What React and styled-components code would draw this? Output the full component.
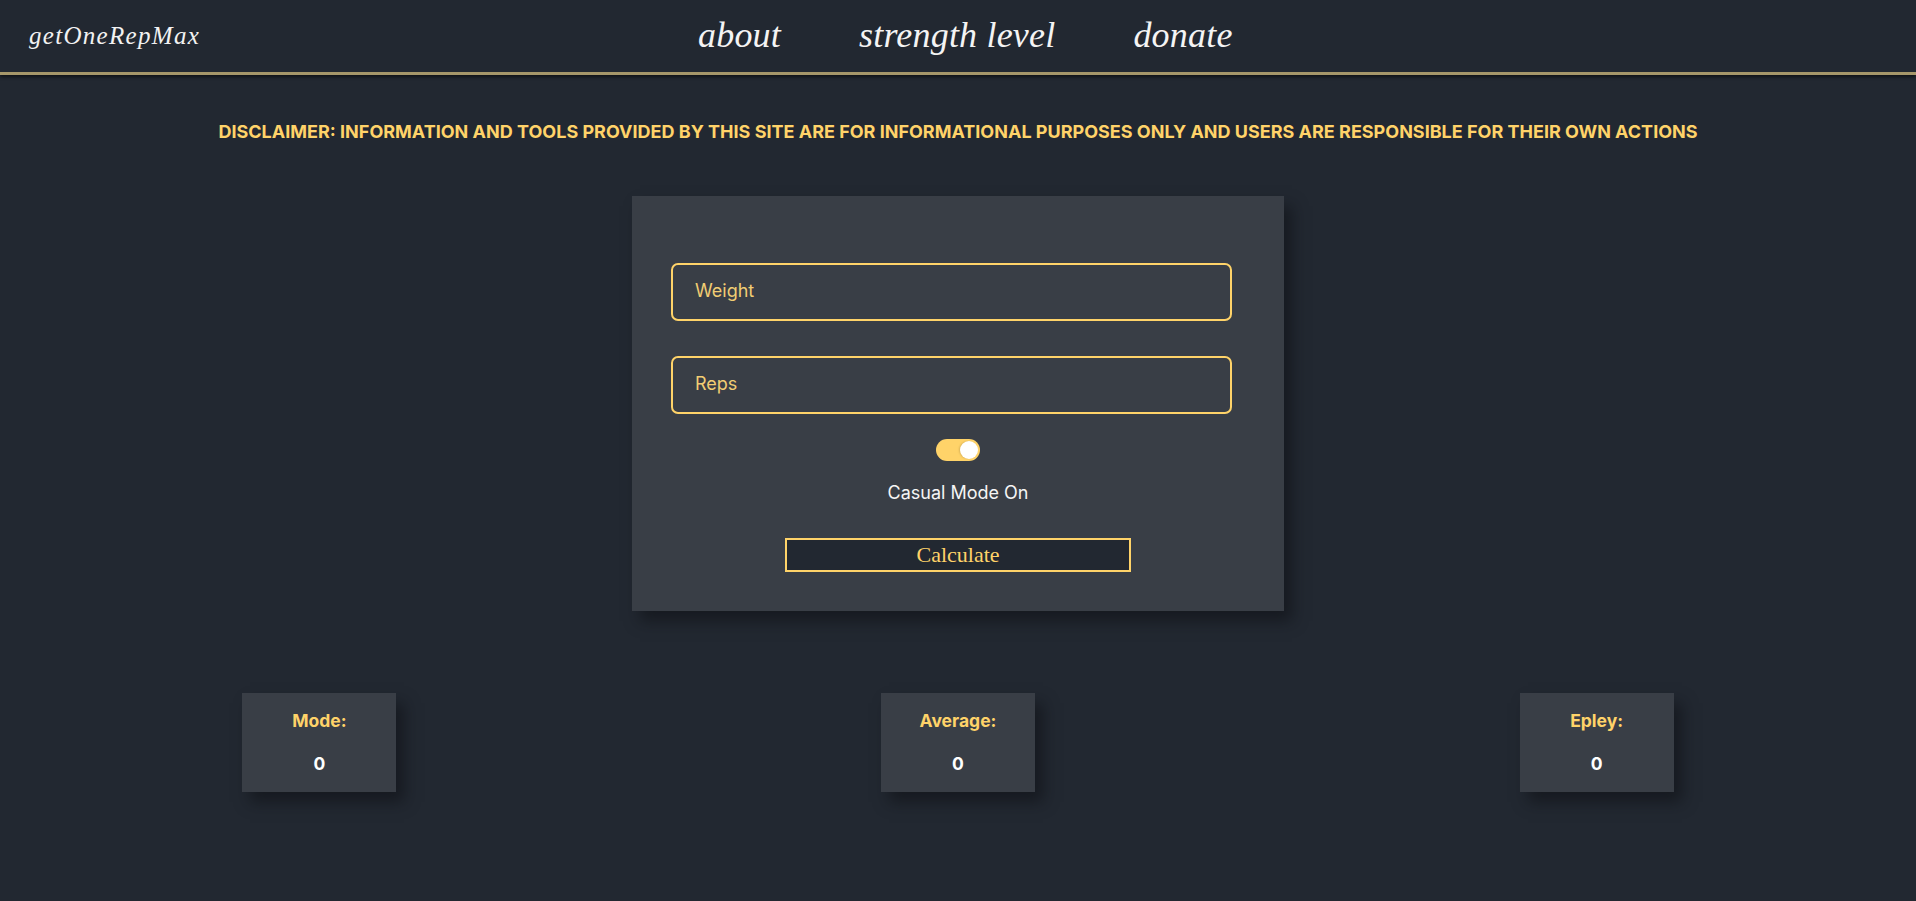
import React from "react";
import styled, { createGlobalStyle } from "styled-components";

const GOLD = "#FFD369";
const DARK = "#222831";
const CARD = "#393E46";

const GlobalStyle = createGlobalStyle`
  html, body {
    margin: 0;
    padding: 0;
    background: ${DARK};
  }
  body {
    font-family: Inter, "Noto Sans", sans-serif;
    color: #eeeeee;
  }
  * { box-sizing: border-box; }
`;

const Page = styled.div`
  min-height: 901px;
  background: ${DARK};
`;

const Header = styled.header`
  height: 75px;
  display: flex;
  align-items: center;
  border-bottom: 3px solid #a6976a;
  box-shadow: 0 2px 3px rgba(0, 0, 0, 0.55);
`;

const Logo = styled.a`
  width: 698px;
  padding-left: 29px;
  font-family: "Liberation Serif", serif;
  font-style: italic;
  font-size: 25px;
  letter-spacing: 1.3px;
  color: #f2f2f2;
  text-decoration: none;
  margin-top: 0;
`;

const Nav = styled.nav`
  display: flex;
  align-items: center;
  gap: 78px;
`;

const NavLink = styled.a`
  font-family: "Liberation Serif", serif;
  font-style: italic;
  font-size: 36px;
  letter-spacing: 0.2px;
  color: #f4f4f4;
  text-decoration: none;
  margin-top: -3px;
`;

const Disclaimer = styled.p`
  margin: 0;
  padding-top: 46px;
  text-align: center;
  font-family: Inter, sans-serif;
  font-weight: 700;
  font-size: 18px;
  line-height: 22px;
  color: ${GOLD};
  text-transform: uppercase;
`;

const Main = styled.main`
  display: flex;
  flex-direction: column;
  align-items: center;
  padding-top: 53px;
`;

const Card = styled.section`
  width: 652px;
  background: ${CARD};
  padding: 67px 39px 39px;
  display: flex;
  flex-direction: column;
  align-items: center;
  box-shadow: 8px 10px 14px rgba(15, 17, 22, 0.6);
`;

const Input = styled.input`
  align-self: flex-start;
  width: 561px;
  height: 58px;
  margin-bottom: ${(p) => p.$gap}px;
  background: transparent;
  border: 2px solid ${GOLD};
  border-radius: 7px;
  padding: 0 22px 3px;
  font-family: Inter, sans-serif;
  font-size: 18px;
  color: ${GOLD};
  outline: none;
  &::placeholder {
    color: #f1cd73;
  }
`;

const Toggle = styled.div`
  width: 44px;
  height: 22px;
  border-radius: 11px;
  background: ${GOLD};
  position: relative;
  margin-top: 1px;
`;

const Knob = styled.span`
  position: absolute;
  right: 2px;
  top: 2px;
  width: 18px;
  height: 18px;
  border-radius: 50%;
  background: #ffffff;
  box-shadow: -1px 0 2px rgba(0, 0, 0, 0.15);
`;

const ModeLabel = styled.div`
  margin-top: 21px;
  font-family: Inter, sans-serif;
  font-size: 18px;
  line-height: 22px;
  color: #f5f5f5;
`;

const CalcButton = styled.button`
  margin-top: 34px;
  width: 346px;
  height: 34px;
  background: ${DARK};
  border: 2px solid ${GOLD};
  font-family: "Liberation Serif", serif;
  font-size: 22px;
  color: ${GOLD};
  cursor: pointer;
  padding: 0;
`;

const Results = styled.div`
  width: 100%;
  display: grid;
  grid-template-columns: repeat(3, 1fr);
  margin-top: 82px;
`;

const ResultCell = styled.div`
  display: flex;
  justify-content: center;
`;

const ResultBox = styled.div`
  width: 154px;
  height: 99px;
  background: ${CARD};
  display: flex;
  flex-direction: column;
  align-items: center;
  padding-top: 17px;
  box-shadow: 8px 10px 14px rgba(15, 17, 22, 0.6);
`;

const ResultLabel = styled.div`
  font-family: Inter, sans-serif;
  font-weight: 700;
  font-size: 17.5px;
  line-height: 22px;
  color: ${GOLD};
`;

const ResultValue = styled.div`
  margin-top: 21px;
  font-family: Inter, sans-serif;
  font-weight: 700;
  font-size: 17.5px;
  line-height: 22px;
  color: #ffffff;
`;

const results = [
  { label: "Mode:", value: 0 },
  { label: "Average:", value: 0 },
  { label: "Epley:", value: 0 },
];

export default function App() {
  return (
    <Page>
      <GlobalStyle />
      <Header>
        <Logo href="#">getOneRepMax</Logo>
        <Nav>
          <NavLink href="#">about</NavLink>
          <NavLink href="#">strength level</NavLink>
          <NavLink href="#">donate</NavLink>
        </Nav>
      </Header>
      <Disclaimer>
        Disclaimer: Information and tools provided by this site are for informational purposes only and users are responsible for their own actions
      </Disclaimer>
      <Main>
        <Card>
          <Input placeholder="Weight" $gap={35} />
          <Input placeholder="Reps" $gap={24} />
          <Toggle>
            <Knob />
          </Toggle>
          <ModeLabel>Casual Mode On</ModeLabel>
          <CalcButton>Calculate</CalcButton>
        </Card>
        <Results>
          {results.map((r) => (
            <ResultCell key={r.label}>
              <ResultBox>
                <ResultLabel>{r.label}</ResultLabel>
                <ResultValue>{r.value}</ResultValue>
              </ResultBox>
            </ResultCell>
          ))}
        </Results>
      </Main>
    </Page>
  );
}
